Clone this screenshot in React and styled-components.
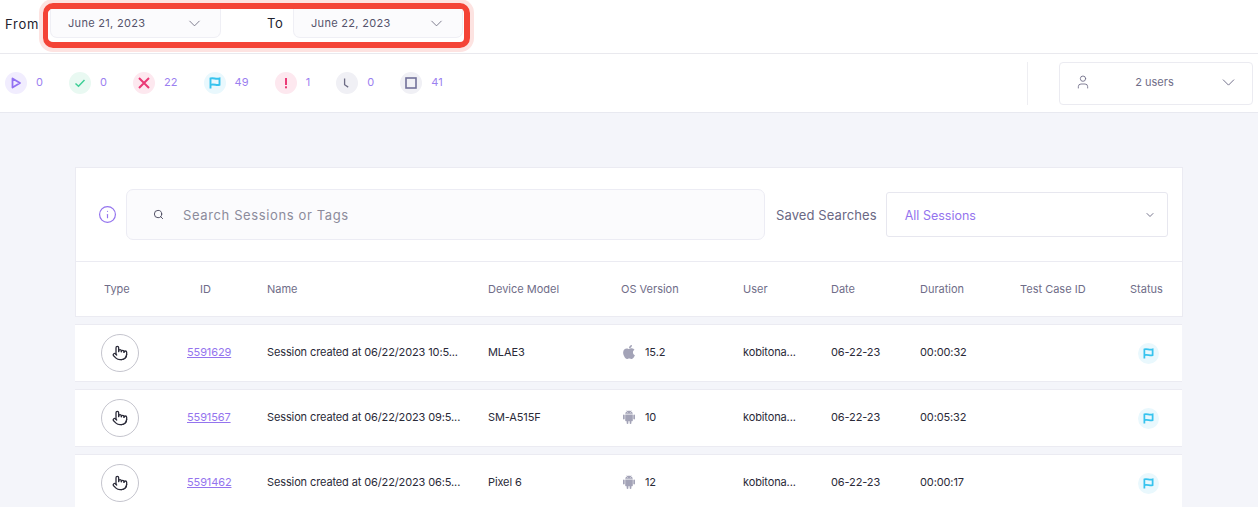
import React from "react"
import styled, { createGlobalStyle } from "styled-components"
import { FaApple } from "react-icons/fa"
import { AiFillAndroid } from "react-icons/ai"
import { ChevronDown, Search, Info, User, Pointer } from "lucide-react"

const GlobalStyle = createGlobalStyle`
  html, body {
    margin: 0;
    height: 100%;
    overflow: hidden;
    background: #f4f5fa;
    font-family: Inter, "Noto Sans", "Liberation Sans", sans-serif;
  }
`

const TopBar = styled.header`
  display: flex;
  align-items: center;
  height: 53px;
  padding-left: 5px;
  background: #fff;
  border-bottom: 1px solid #e9e9ee;
`

const FromLabel = styled.span`
  font-size: 13px;
  color: #22222e;
  letter-spacing: 0.75px;
  width: 38px;
  margin-bottom: 6px;
`

const RangeBox = styled.div`
  display: flex;
  align-items: flex-start;
  width: 427px;
  height: 45px;
  margin-bottom: 2px;
  box-sizing: border-box;
  padding: 0 0 0 2px;
  border: 6px solid #f44336;
  border-left-width: 5px;
  border-radius: 10px;
  box-shadow: 0 0 0 4px #fde3e1;
  overflow: hidden;
`

const DateSelect = styled.div`
  display: flex;
  align-items: center;
  justify-content: space-between;
  width: ${p => p.$width}px;
  height: 29px;
  box-sizing: border-box;
  padding: 0 16px 0 17px;
  background: #fbfbfd;
  border: 1px solid #efeff5;
  border-top: none;
  border-radius: 0 0 7px 7px;
  font-size: 11px;
  letter-spacing: 0.3px;
  color: #55536b;
  svg { color: #6e6d80; }
`

const ToLabel = styled.span`
  font-size: 13px;
  color: #22222e;
  margin-left: 46px;
  width: 26px;
  line-height: 28px;
  letter-spacing: 0.7px;
`

const StatusBar = styled.div`
  display: flex;
  align-items: center;
  justify-content: space-between;
  height: 58px;
  padding: 0 5px;
  background: #fff;
  border-bottom: 1px solid #e8e9f0;
`

const Stats = styled.div`
  display: flex;
  align-items: center;
  gap: 26.1px;
`

const Stat = styled.div`
  display: flex;
  align-items: center;
  gap: 9px;
  font-size: 11px;
  line-height: 20px;
  color: #9b80f0;
`

const Count = styled.span`
  margin-bottom: 2px;
`

const Badge = styled.span`
  display: flex;
  align-items: center;
  justify-content: center;
  flex: none;
  width: 22px;
  height: 22px;
  border-radius: 50%;
  background: ${p => p.$bg};
`

const UserArea = styled.div`
  display: flex;
  align-items: center;
  height: 43px;
  padding-left: 31px;
  border-left: 1px solid #eeeef2;
`

const UserSelect = styled.div`
  display: flex;
  align-items: center;
  justify-content: space-between;
  box-sizing: border-box;
  width: 194px;
  height: 43px;
  padding: 0 13px 2px 15px;
  background: #fff;
  border: 1px solid #ebebf1;
  border-radius: 4px;
  font-size: 11px;
  color: #6f6d88;
  svg { color: #6f6d88; }
`

const Main = styled.main`
  padding: 54px 75px 0;
  width: 1108px;
`

const Card = styled.section`
  background: #fff;
  border: 1px solid #ebebf2;
`

const SearchRow = styled.div`
  display: flex;
  align-items: center;
  height: 93px;
  padding-left: 22px;
  border-bottom: 1px solid #ebebf2;
  svg { flex: none; }
`

const SearchBox = styled.div`
  display: flex;
  align-items: center;
  width: 639px;
  height: 51px;
  box-sizing: border-box;
  margin-left: 9px;
  padding-left: 26px;
  background: #fbfbfd;
  border: 1px solid #ececf4;
  border-radius: 7px;
  font-size: 13px;
  letter-spacing: 0.62px;
  color: #8c8b9b;
  svg { color: #45445a; margin-right: 19px; }
`

const SavedLabel = styled.span`
  margin-left: 11px;
  font-size: 13px;
  letter-spacing: 0.1px;
  color: #6a6884;
  white-space: nowrap;
`

const SavedSelect = styled.div`
  display: flex;
  align-items: center;
  justify-content: space-between;
  box-sizing: border-box;
  width: 282px;
  height: 45px;
  margin-left: 9px;
  padding: 1px 11px 0 18px;
  border: 1px solid #e7e7ef;
  border-radius: 3px;
  font-size: 12.5px;
  color: #9474ee;
  svg { color: #5f5d78; }
`

const columns = "92px 100px 221px 133px 122px 88px 89px 100px 110px 1fr"

const HeadRow = styled.div`
  display: grid;
  grid-template-columns: ${columns};
  align-items: center;
  height: 54px;
  margin-left: -1px;
  font-size: 11px;
  color: #6f6d88;
`

const Gap = styled.div`
  height: 7px;
`

const Row = styled.div`
  display: grid;
  grid-template-columns: ${columns};
  align-items: center;
  box-sizing: border-box;
  height: 58px;
  margin: 0 1px 7px 0;
  background: #fff;
  border-top: 1px solid #ebebf2;
  border-bottom: 1px solid #ebebf2;
  font-size: 11px;
  letter-spacing: -0.12px;
  color: #2a2a38;
`

const Cell = styled.div`
  padding-left: ${p => p.$pad || 0}px;
  white-space: nowrap;
`

const TextCell = styled(Cell)`
  padding-bottom: 2px;
`

const TouchCircle = styled.span`
  display: flex;
  align-items: center;
  justify-content: center;
  width: 38px;
  height: 38px;
  box-sizing: border-box;
  border: 1px solid #c5c5ce;
  border-radius: 50%;
  color: #2a2a38;
`

const SessionLink = styled.a`
  color: #9474ee;
  text-decoration: underline;
`

const OsCell = styled.div`
  display: flex;
  align-items: center;
  gap: 8px;
  svg { color: #a3a3b7; }
`

const FlagBadge = styled(Badge)`
  width: 21px;
  height: 21px;
`

const IconPlay = () => (
  <svg width="12" height="12" viewBox="0 0 12 12" fill="none" stroke="#9270f2" strokeWidth="1.8" strokeLinejoin="round">
    <path d="M2.5 1.5 10 6l-7.5 4.5z" />
  </svg>
)

const IconCheck = () => (
  <svg width="12" height="12" viewBox="0 0 12 12" fill="none" stroke="#3ecf96" strokeWidth="1.5">
    <path d="M1.5 6.5 4.5 9.2 10.5 3" />
  </svg>
)

const IconCross = () => (
  <svg width="12" height="12" viewBox="0 0 12 12" fill="none" stroke="#ea3a76" strokeWidth="2">
    <path d="M1 1l10 10M11 1 1 11" />
  </svg>
)

const IconFlag = ({ size = 12 }) => (
  <svg width={size} height={size} viewBox="0 0 12 12" fill="none" stroke="#36c3ee" strokeWidth="1.9">
    <path d="M1.5 11.5V1.5c3-1 5.5 1.2 9 0v6.3c-3 1-5.5-1.2-9 0" />
  </svg>
)

const IconAlert = () => (
  <svg width="12" height="12" viewBox="0 0 12 12" fill="#ea3a76">
    <rect x="5" y="1" width="2" height="7" />
    <rect x="5" y="9.3" width="2" height="2" />
  </svg>
)

const IconClock = () => (
  <svg width="12" height="12" viewBox="0 0 12 12" fill="none" stroke="#6d6c85" strokeWidth="1.3">
    <path d="M3.6 1.5v6.2l3.6 2.4" />
  </svg>
)

const IconStop = () => (
  <svg width="12" height="12" viewBox="0 0 12 12" fill="none" stroke="#72719a" strokeWidth="1.6">
    <rect x="1" y="1" width="10" height="10" />
  </svg>
)

const stats = [
  { icon: <IconPlay />, bg: "#f1edfe", count: 0 },
  { icon: <IconCheck />, bg: "#e9f9f2", count: 0 },
  { icon: <IconCross />, bg: "#fde8ef", count: 22 },
  { icon: <IconFlag />, bg: "#e9f8fd", count: 49 },
  { icon: <IconAlert />, bg: "#fde8ef", count: 1 },
  { icon: <IconClock />, bg: "#f0f0f5", count: 0 },
  { icon: <IconStop />, bg: "#f0f0f5", count: 41 },
]

const headers = [
  ["Type", 29], ["ID", 33], ["Name"], ["Device Model"], ["OS Version"],
  ["User"], ["Date"], ["Duration"], ["Test Case ID"], ["Status"],
]

const sessions = [
  { id: 5591629, name: "Session created at 06/22/2023 10:5...", model: "MLAE3", os: "ios", version: "15.2", duration: "00:00:32" },
  { id: 5591567, name: "Session created at 06/22/2023 09:5...", model: "SM-A515F", os: "android", version: "10", duration: "00:05:32" },
  { id: 5591462, name: "Session created at 06/22/2023 06:5...", model: "Pixel 6", os: "android", version: "12", duration: "00:00:17" },
]

const App = () => (
  <>
    <GlobalStyle />
    <TopBar>
      <FromLabel>From</FromLabel>
      <RangeBox>
        <DateSelect $width={171}>
          June 21, 2023 <ChevronDown size={19} strokeWidth={1.1} />
        </DateSelect>
        <ToLabel>To</ToLabel>
        <DateSelect $width={170}>
          June 22, 2023 <ChevronDown size={19} strokeWidth={1.1} />
        </DateSelect>
      </RangeBox>
    </TopBar>
    <StatusBar>
      <Stats>
        {stats.map((s, i) => (
          <Stat key={i}>
            <Badge $bg={s.bg}>{s.icon}</Badge>
            <Count>{s.count}</Count>
          </Stat>
        ))}
      </Stats>
      <UserArea>
        <UserSelect>
          <User size={16} strokeWidth={1.3} />
          2 users
          <ChevronDown size={21} strokeWidth={1.1} />
        </UserSelect>
      </UserArea>
    </StatusBar>
    <Main>
      <Card>
        <SearchRow>
          <Info size={19} color="#9474ee" strokeWidth={1.5} />
          <SearchBox>
            <Search size={11} strokeWidth={2} />
            Search Sessions or Tags
          </SearchBox>
          <SavedLabel>Saved Searches</SavedLabel>
          <SavedSelect>
            All Sessions <ChevronDown size={12} strokeWidth={1.7} />
          </SavedSelect>
        </SearchRow>
        <HeadRow>
          {headers.map(([label, pad]) => (
            <Cell key={label} $pad={pad}>{label}</Cell>
          ))}
        </HeadRow>
      </Card>
      <Gap />
      {sessions.map(s => (
        <Row key={s.id}>
          <Cell $pad={26}>
            <TouchCircle><Pointer size={16} strokeWidth={1.9} /></TouchCircle>
          </Cell>
          <TextCell $pad={20}><SessionLink href="#">{s.id}</SessionLink></TextCell>
          <TextCell>{s.name}</TextCell>
          <TextCell>{s.model}</TextCell>
          <TextCell>
            <OsCell>
              {s.os === "ios" ? <FaApple size={16} /> : <AiFillAndroid size={16} />}
              {s.version}
            </OsCell>
          </TextCell>
          <TextCell>kobitona...</TextCell>
          <TextCell>06-22-23</TextCell>
          <TextCell>{s.duration}</TextCell>
          <Cell />
          <Cell $pad={8}>
            <FlagBadge $bg="#e9f8fd"><IconFlag size={11} /></FlagBadge>
          </Cell>
        </Row>
      ))}
    </Main>
  </>
)

export default App
